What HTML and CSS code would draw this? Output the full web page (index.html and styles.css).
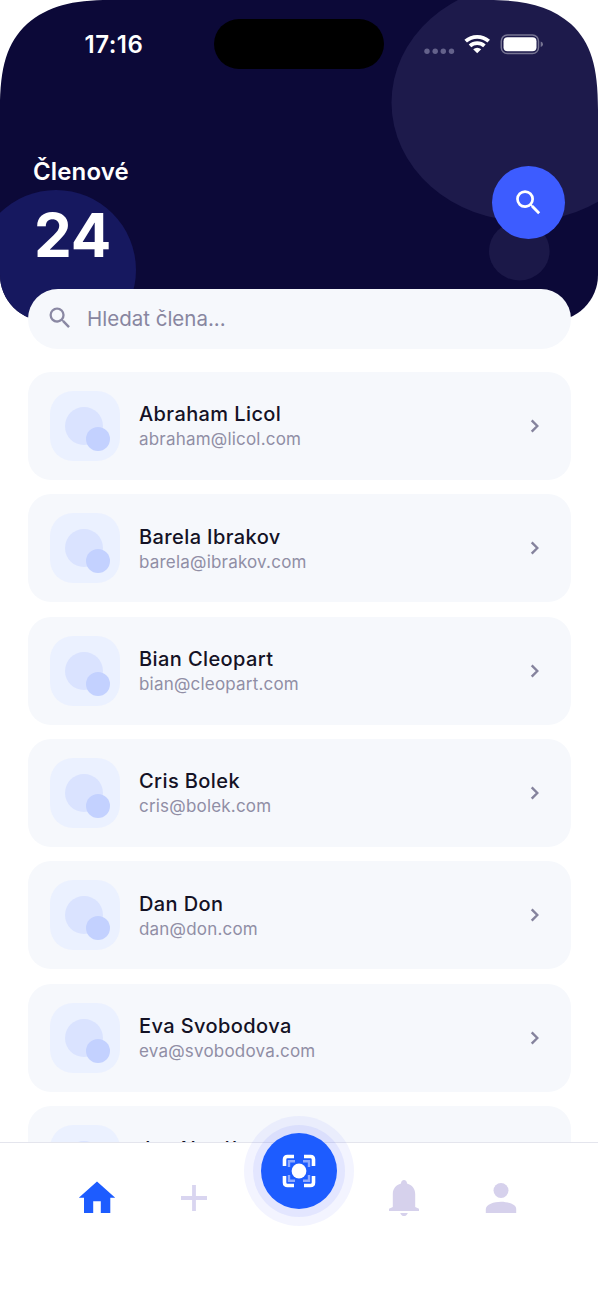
FILE: index.html
```html
<!DOCTYPE html>
<html lang="cs">
<head>
<meta charset="utf-8">
<title>Členové</title>
<link rel="stylesheet" href="styles.css">
</head>
<body>
<div class="phone">
  <header class="header">
    <svg class="header-art" width="598" height="321" viewBox="0 0 598 321">
      <ellipse cx="525" cy="102.5" rx="133.5" ry="118.5" fill="#1d1a4b"/>
      <circle cx="56" cy="270" r="80" fill="#16185f"/>
      <ellipse cx="519.3" cy="251" rx="30.3" ry="29.5" fill="#1b1848"/>
      <path d="M0 0H110C72 0 48 6 27 24C7 43 0 66 0 110Z" fill="#fff"/>
      <path d="M598 0H488C526 0 550 6 571 24C591 43 598 66 598 110Z" fill="#fff"/>
    </svg>
    <div class="status">
      <span class="time">17:16</span>
      <span class="island"></span>
      <svg class="indicators" width="122" height="26" viewBox="0 0 122 26">
        <g fill="#64628b"><circle cx="5" cy="19.3" r="2.7"/><circle cx="13.2" cy="19.3" r="2.7"/><circle cx="21.3" cy="19.3" r="2.7"/><circle cx="29.5" cy="19.3" r="2.7"/></g>
        <g fill="none" stroke="#fff" stroke-width="3.8"><path d="M43.7 9.2A17.2 17.2 0 0 1 66.7 9.2"/><path d="M48 13.8A10.8 10.8 0 0 1 62.4 13.8"/></g>
        <path d="M51.2 17.3A6 6 0 0 1 59.2 17.3L55.2 21.3Z" fill="#fff"/>
        <rect x="79.3" y="3" width="37.2" height="18.6" rx="6" fill="none" stroke="#777593" stroke-width="1.5"/>
        <rect x="81.5" y="5.3" width="33" height="14" rx="4" fill="#fff"/>
        <path d="M118.7 9.4Q121 10.2 121 12.2T118.7 15Z" fill="#777593"/>
      </svg>
    </div>
    <div class="summary">
      <div>
        <h1 class="title">Členové</h1>
        <div class="count">24</div>
      </div>
      <button class="search-button" aria-label="Hledat">
        <svg width="33" height="33" viewBox="0 0 24 24" fill="#fff"><path d="M15.5 14h-.79l-.28-.27A6.47 6.47 0 0 0 16 9.5 6.5 6.5 0 1 0 9.5 16c1.61 0 3.09-.59 4.23-1.57l.27.28v.79l5 4.99L20.49 19zm-6 0C7.01 14 5 11.99 5 9.5S7.01 5 9.5 5 14 7.01 14 9.5 11.99 14 9.5 14z"/></svg>
      </button>
    </div>
  </header>
  <div class="search-field">
    <svg width="28" height="28" viewBox="0 0 24 24" fill="#8a88a3"><path d="M15.5 14h-.79l-.28-.27A6.47 6.47 0 0 0 16 9.5 6.5 6.5 0 1 0 9.5 16c1.61 0 3.09-.59 4.23-1.57l.27.28v.79l5 4.99L20.49 19zm-6 0C7.01 14 5 11.99 5 9.5S7.01 5 9.5 5 14 7.01 14 9.5 11.99 14 9.5 14z"/></svg>
    <span>Hledat člena...</span>
  </div>
  <main class="list">
    <article class="card"><span class="avatar"><i></i></span><div class="person"><div class="name">Abraham Licol</div><div class="mail">abraham@licol.com</div></div><svg class="chevron" width="10" height="14" viewBox="0 0 10 14"><path d="M1.7 1.3L7.3 7L1.7 12.7"/></svg></article>
    <article class="card"><span class="avatar"><i></i></span><div class="person"><div class="name">Barela Ibrakov</div><div class="mail">barela@ibrakov.com</div></div><svg class="chevron" width="10" height="14" viewBox="0 0 10 14"><path d="M1.7 1.3L7.3 7L1.7 12.7"/></svg></article>
    <article class="card"><span class="avatar"><i></i></span><div class="person"><div class="name">Bian Cleopart</div><div class="mail">bian@cleopart.com</div></div><svg class="chevron" width="10" height="14" viewBox="0 0 10 14"><path d="M1.7 1.3L7.3 7L1.7 12.7"/></svg></article>
    <article class="card"><span class="avatar"><i></i></span><div class="person"><div class="name">Cris Bolek</div><div class="mail">cris@bolek.com</div></div><svg class="chevron" width="10" height="14" viewBox="0 0 10 14"><path d="M1.7 1.3L7.3 7L1.7 12.7"/></svg></article>
    <article class="card"><span class="avatar"><i></i></span><div class="person"><div class="name">Dan Don</div><div class="mail">dan@don.com</div></div><svg class="chevron" width="10" height="14" viewBox="0 0 10 14"><path d="M1.7 1.3L7.3 7L1.7 12.7"/></svg></article>
    <article class="card"><span class="avatar"><i></i></span><div class="person"><div class="name">Eva Svobodova</div><div class="mail">eva@svobodova.com</div></div><svg class="chevron" width="10" height="14" viewBox="0 0 10 14"><path d="M1.7 1.3L7.3 7L1.7 12.7"/></svg></article>
    <article class="card"><span class="avatar"><i></i></span><div class="person"><div class="name">Jan Novák</div></div></article>
  </main>
  <nav class="tabs">
    <svg width="38" height="38" viewBox="0 0 38 38"><path d="M19 2.5L37.2 18.7H32.3V34H22.8V22.3H15.2V34H6V18.7H.8Z" fill="#1d5cff"/></svg>
    <svg width="38" height="38" viewBox="0 0 38 38"><path d="M19 6V32M6 19H32" stroke="#d9d5f0" stroke-width="3.8" fill="none"/></svg>
    <span class="scan">
      <svg width="34" height="34" viewBox="0 0 34 34" fill="none">
        <g stroke="#8eaaff" stroke-width="2.4"><path d="M7 13V7.2H13M21 7.2H27V13M27 21V26.8H21M13 26.8H7V21"/></g>
        <g stroke="#fff" stroke-width="3.6"><path d="M2.5 12V5.5Q2.5 2.5 5.5 2.5H12M22 2.5H28.5Q31.5 2.5 31.5 5.5V12M31.5 22V28.5Q31.5 31.5 28.5 31.5H22M12 31.5H5.5Q2.5 31.5 2.5 28.5V22"/></g>
        <circle cx="17" cy="17" r="7.4" fill="#fff"/>
      </svg>
    </span>
    <svg width="38" height="38" viewBox="0 0 38 38" fill="#d6d1ec"><path d="M4 32V29.8L7.8 28V15C7.8 9.5 11 5.9 16 4.5C16 2.3 17.4 1 19 1S22 2.3 22 4.5C27 5.9 30.2 9.5 30.2 15V28L34 29.8V32ZM15.2 34H22.8Q21.7 37.1 19 37.1T15.2 34Z"/></svg>
    <svg width="38" height="38" viewBox="0 0 38 38" fill="#d6d1ec"><circle cx="19" cy="11.5" r="7.5"/><path d="M3.8 34V30C3.8 25.5 12 22.7 19 22.7S34.2 25.5 34.2 30V34Z"/></svg>
  </nav>
</div>
</body>
</html>
```

FILE: styles.css
```css
* { box-sizing: border-box; }
body { margin: 0; background: #fff; font-family: Inter, "Liberation Sans", sans-serif; }
.phone { position: relative; height: 1300px; overflow: hidden; display: flex; flex-direction: column; }
.header { position: relative; flex: none; height: 321px; background: #0c0938; border-radius: 0 0 46px 46px; overflow: hidden; color: #fff; }
.header-art { position: absolute; inset: 0; }
.status { position: relative; display: flex; align-items: center; height: 50px; margin-top: 19px; }
.time { width: 214px; padding: 2px 0 0 84.5px; font-size: 24px; font-weight: 600; letter-spacing: 0.5px; line-height: 50px; }
.island { width: 170px; height: 50px; border-radius: 25px; background: #000; }
.indicators { margin: 1.4px 0 0 38px; }
.summary { position: relative; display: flex; justify-content: space-between; padding: 86px 33px 0; }
.title { margin: 0; font-size: 24px; font-weight: 600; line-height: 34px; letter-spacing: .15px; }
.count { padding-left: 1px; margin-top: 9px; font-size: 60px; font-weight: 700; line-height: 74px; }
.search-button { display: grid; place-items: center; width: 73px; height: 73px; margin-top: 11px; padding: 0 0 1px; border: 0; border-radius: 50%; background: #3d5cff; }
.search-field { position: relative; flex: none; display: flex; align-items: center; gap: 13.5px; height: 60px; margin: -32px 27.5px 0; padding: 0 0 2px 18px; border-radius: 30px; background: #f6f8fc; color: #8886a0; font-size: 20.5px; }
.list { flex: none; display: flex; flex-direction: column; gap: 14.4px; height: 793px; padding: 22.8px 27.5px 0; overflow: hidden; }
.card { flex: none; display: flex; align-items: center; height: 108px; padding: 0 31px 0 22.5px; border-radius: 23px; background: #f6f8fc; }
.card:last-child .person { align-self: flex-start; margin-top: 30px; }
.avatar { position: relative; flex: none; width: 70px; height: 70px; border-radius: 23px; background: #ebf1ff; }
.avatar::before, .avatar i { content: ""; position: absolute; border-radius: 50%; }
.avatar::before { left: 15px; top: 16px; width: 38px; height: 38px; background: #dae3ff; }
.avatar i { left: 36px; top: 36px; width: 24px; height: 24px; background: #c3d1ff; }
.person { flex: 1; margin: 2px 0 0 19px; }
.name { color: #141225; font-size: 20px; font-weight: 500; line-height: 26px; letter-spacing: .4px; }
.mail { color: #908ea5; font-size: 17px; line-height: 25px; letter-spacing: .2px; }
.chevron { fill: none; stroke: #85839d; stroke-width: 2.4; }
.tabs { position: relative; flex: none; display: flex; align-items: flex-start; height: 158px; padding: 36px 78px 0; border-top: 1px solid #e4e5ed; background: #fff; }
.tabs > svg { flex: none; }
.tabs > svg:nth-child(2) { margin-left: 59px; }
.tabs > svg:nth-child(4) { margin-left: 48px; }
.tabs > svg:nth-child(5) { margin-left: 59px; }
.scan { flex: none; display: grid; place-items: center; width: 76px; height: 76px; margin: -46.5px 0 0 48px; border-radius: 50%; background: #1d5cff; box-shadow: 0 0 0 8px rgba(84,105,255,.1), 0 0 0 17px rgba(84,105,255,.07); }
```
